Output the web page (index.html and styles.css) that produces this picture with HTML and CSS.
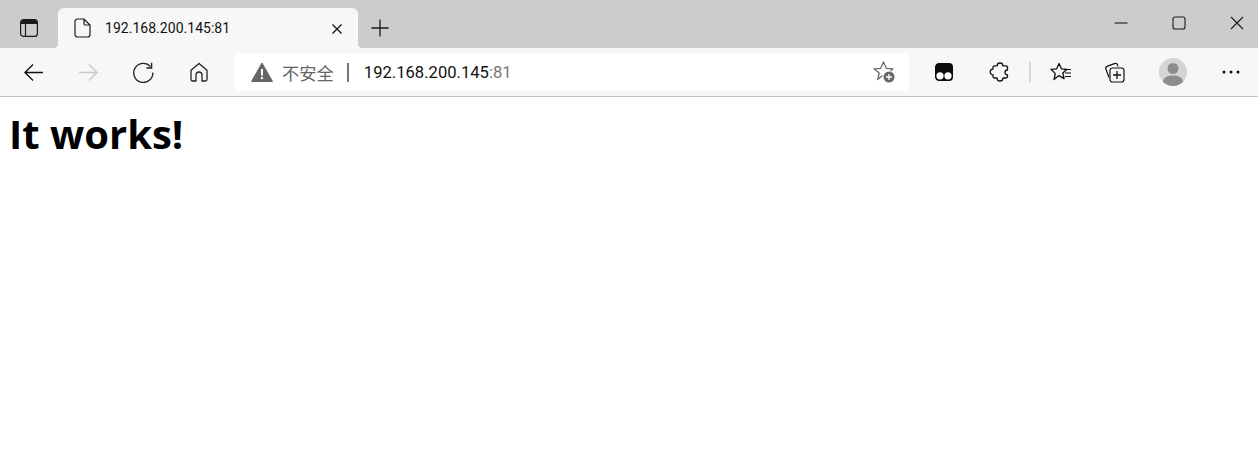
FILE: index.html
```html
<!DOCTYPE html>
<html lang="zh-CN">
<head>
    <meta charset="UTF-8">
    <meta name="viewport" content="width=device-width, initial-scale=1.0">
    <title>192.168.200.145:81</title>
    <link rel="stylesheet" href="styles.css">
</head>
<body>
    <div class="tab-strip">
        <div class="tab-actions">
            <svg width="20" height="20" viewBox="0 0 20 20"><rect x="1.6" y="1.6" width="16.8" height="16.8" rx="3" fill="none" stroke="#1a1a1a" stroke-width="1.2"/><path d="M2 6V4a2 2 0 0 1 2-2h12a2 2 0 0 1 2 2v2z" fill="#1a1a1a"/><path d="M6.5 6v12" stroke="#1a1a1a" stroke-width="1.2"/></svg>
        </div>
        <div class="tab">
            <svg class="tab-icon" width="17" height="20" viewBox="0 0 17 20"><path d="M4 1h6l6 6v9.5a2.5 2.5 0 0 1-2.5 2.5h-10A2.5 2.5 0 0 1 1 16.500v-13A2.500 2.500 0 0 1 3.500 1zM10 1v4.500A1.500 1.500 0 0 0 11.500 7H16" fill="none" stroke="#1a1a1a" stroke-width="1.2"/></svg>
            <span class="tab-title">192.168.200.145:81</span>
            <svg class="tab-close" width="12" height="12" viewBox="0 0 12 12"><path d="M1.500 1.500l9 9M10.500 1.500l-9 9" stroke="#111" stroke-width="1.300"/></svg>
        </div>
        <div class="new-tab">
            <svg width="18" height="18" viewBox="0 0 18 18"><path d="M9 0.500v17M0.500 9h17" stroke="#1a1a1a" stroke-width="1.300"/></svg>
        </div>
        <div class="window-controls">
            <svg width="14" height="14" viewBox="0 0 14 14"><path d="M0.500 7h13" stroke="#1a1a1a" stroke-width="1.100"/></svg>
            <svg width="14" height="14" viewBox="0 0 14 14"><rect x="1" y="1" width="12" height="12" rx="2" fill="none" stroke="#1a1a1a" stroke-width="1.100"/></svg>
            <svg width="14" height="14" viewBox="0 0 14 14"><path d="M1 1l12 12M13 1L1 13" stroke="#1a1a1a" stroke-width="1.100"/></svg>
        </div>
    </div>

    <div class="toolbar">
        <div class="tool-btn"><svg width="21" height="19" viewBox="0 0 22 20"><path d="M21 10H2M10.500 1.500L2 10l8.500 8.500" fill="none" stroke="#111" stroke-width="1.400"/></svg></div>
        <div class="tool-btn"><svg width="21" height="19" viewBox="0 0 22 20"><path d="M1 10h19M11.500 1.500L20 10l-8.500 8.500" fill="none" stroke="#c9c9c9" stroke-width="1.400"/></svg></div>
        <div class="tool-btn"><svg width="21" height="21" viewBox="0 0 22 22"><path d="M18.300 4.800A10 10 0 1 0 20.800 11" fill="none" stroke="#222" stroke-width="1.400"/><path d="M19.500 0.800v5.500H14" fill="none" stroke="#222" stroke-width="1.400"/></svg></div>
        <div class="tool-btn"><svg width="20" height="20" viewBox="0 0 20 20"><path d="M7 19H3.500A1.500 1.500 0 0 1 2 17.500V8.300L10 1.500l8 6.800v9.200a1.500 1.500 0 0 1-1.500 1.500H13v-6a3 3 0 0 0-6 0z" fill="none" stroke="#222" stroke-width="1.300" stroke-linejoin="round"/></svg></div>

        <div class="address-bar">
            <svg class="warn-icon" width="22" height="20" viewBox="0 0 22 20"><path d="M11 1L21.500 19.500H0.500z" fill="#666" stroke="#666" stroke-linejoin="round"/><path d="M11 7v6.500" stroke="#fff" stroke-width="2"/><circle cx="11" cy="16" r="1.200" fill="#fff"/></svg>
            <span class="insecure">不安全</span>
            <span class="divider"></span>
            <span class="url">192.168.200.145<span class="url-port">:81</span></span>
            <svg class="star-add" width="22" height="22" viewBox="0 0 22 22"><path d="M9.500 14.500l-4.800 4 1.500-6.500L1 7.800l6.700-.5L10.500 1l2.800 6.300 6.700.5-2.500 2.200" fill="none" stroke="#666" stroke-width="1.200" stroke-linejoin="round"/><circle cx="16" cy="16" r="5.500" fill="#666"/><path d="M16 13v6M13 16h6" stroke="#fff" stroke-width="1.300"/></svg>
        </div>

        <div class="tool-btn"><svg width="20" height="20" viewBox="0 0 20 20"><rect x="1.600" y="1.600" width="16.800" height="16.800" rx="3.500" fill="#0d0d0d" stroke="#0d0d0d" stroke-width="1.200"/><circle cx="6" cy="13.800" r="3.600" fill="#fff"/><circle cx="14" cy="13.800" r="3.600" fill="#fff"/></svg></div>
        <div class="tool-btn"><svg width="20" height="20" viewBox="-1 0 20 20"><path d="M7.200 3.800a2.800 2.800 0 0 1 5.600 0H16a1.500 1.500 0 0 1 1.500 1.500V8a2.500 2.500 0 0 0 0 5v1.500A1.500 1.500 0 0 1 16 16h-3a3 3 0 0 1-6 0H4.500A1.500 1.500 0 0 1 3 14.500v-1.700a2.800 2.800 0 0 1 0-5.600V5.300a1.500 1.500 0 0 1 1.500-1.500z" fill="none" stroke="#111" stroke-width="1.300" stroke-linejoin="round"/></svg></div>
        <span class="tool-sep"></span>
        <div class="tool-btn btn-favorites"><svg width="22" height="21" viewBox="0 0 22 21"><path d="M9 1.500l2.400 5.300 5.600.5-4.200 3.700 1.300 5.600L9 13.600 4 17.600l1.300-6L1 7.300l5.700-.5z" fill="none" stroke="#111" stroke-width="1.300" stroke-linejoin="round"/><path d="M14 7.500h7M15 11h6M15 14.500h6" stroke="#111" stroke-width="1.200"/></svg></div>
        <div class="tool-btn btn-collections"><svg width="21" height="21" viewBox="0 0 21 21"><path d="M5 15.500L2 7.300a2.500 2.500 0 0 1 1.500-3.200l7-2.500a2.500 2.500 0 0 1 3.200 1.500L14 4.500" fill="none" stroke="#111" stroke-width="1.200"/><rect x="6" y="6" width="14" height="14" rx="2.500" fill="#f7f7f7" stroke="#111" stroke-width="1.200"/><path d="M13 9v8M9 13h8" stroke="#111" stroke-width="1.300"/></svg></div>
        <div class="tool-btn btn-profile"><svg width="28" height="28" viewBox="0 0 28 28"><circle cx="14" cy="14" r="14" fill="#d6d5d3"/><circle cx="14" cy="10.500" r="5.500" fill="#8e8c8a"/><path d="M3.800 23.500C5 19 9 17.500 14 17.500s9 1.500 10.200 6A14 14 0 0 1 14 28 14 14 0 0 1 3.800 23.500z" fill="#8e8c8a"/></svg></div>
        <div class="tool-btn btn-more"><svg width="18" height="4" viewBox="0 0 18 4"><circle cx="2" cy="2" r="1.500" fill="#111"/><circle cx="9" cy="2" r="1.500" fill="#111"/><circle cx="16" cy="2" r="1.500" fill="#111"/></svg></div>
    </div>

    <h1>It works!</h1>
</body>
</html>
```

FILE: styles.css
```css
* {
    margin: 0;
    padding: 0;
    box-sizing: border-box;
}

body {
    background: #fff;
    color: #000;
    font-family: 'Roboto', sans-serif;
    overflow: hidden;
}

svg {
    display: block;
    flex-shrink: 0;
}

.tab-strip {
    display: flex;
    align-items: flex-end;
    height: 48px;
    background: #cccccc;
}

.tab-actions {
    display: flex;
    align-items: center;
    justify-content: center;
    width: 58px;
    height: 40px;
}

.tab {
    position: relative;
    display: flex;
    align-items: center;
    width: 300px;
    height: 40px;
    padding: 0 15px 0 16px;
    background: #f7f7f7;
    border-radius: 6px 6px 0 0;
}

/* flared corners at the foot of the tab */
.tab::before,
.tab::after {
    content: "";
    position: absolute;
    bottom: 0;
    width: 5px;
    height: 5px;
}

.tab::before {
    left: -5px;
    background: radial-gradient(circle at 0 0, transparent 5px, #f7f7f7 5.5px);
}

.tab::after {
    right: -5px;
    background: radial-gradient(circle at 100% 0, transparent 5px, #f7f7f7 5.5px);
}

.tab-title {
    flex: 1;
    margin-left: 14px;
    font-size: 14px;
    letter-spacing: 0.03px;
    color: #111;
}

.tab-close {
    margin-top: 1px;
}

.new-tab {
    display: flex;
    align-items: center;
    justify-content: center;
    width: 43px;
    height: 40px;
}

.window-controls {
    display: flex;
    gap: 44px;
    margin-left: auto;
    height: 48px;
    padding: 16px 14px 0 0;
}

.toolbar {
    display: flex;
    align-items: center;
    height: 49px;
    padding-left: 6px;
    background: #f7f7f7;
    border-bottom: 1px solid #c4c4c4;
}

.tool-btn {
    display: flex;
    align-items: center;
    justify-content: center;
    width: 55px;
    height: 48px;
}

.btn-favorites {
    width: 54px;
}

.btn-collections {
    width: 53px;
}

.btn-profile {
    width: 63px;
}

.btn-more {
    width: 54px;
}

.tool-sep {
    width: 2px;
    height: 20px;
    background: #d6d6d6;
    margin: 0 3px 0 3px;
}

.address-bar {
    display: flex;
    align-items: center;
    width: 675px;
    height: 38px;
    margin: 0 7px 0 8px;
    padding: 0 14px 0 17px;
    background: #fff;
    border-radius: 5px;
}

.insecure {
    margin-left: 9px;
    font-family: 'Noto Sans CJK SC', sans-serif;
    font-size: 17.3px;
    color: #666;
}

.divider {
    width: 2px;
    height: 19px;
    margin: 0 15px 0 13px;
    background: #777;
}

.url {
    flex: 1;
    font-size: 16.6px;
    color: #111;
}

.url-port {
    color: #777;
}

h1 {
    padding: 12px 0 0 9px;
    font-family: 'Open Sans', sans-serif;
    font-size: 40px;
    font-weight: 700;
    line-height: 50px;
}
```
